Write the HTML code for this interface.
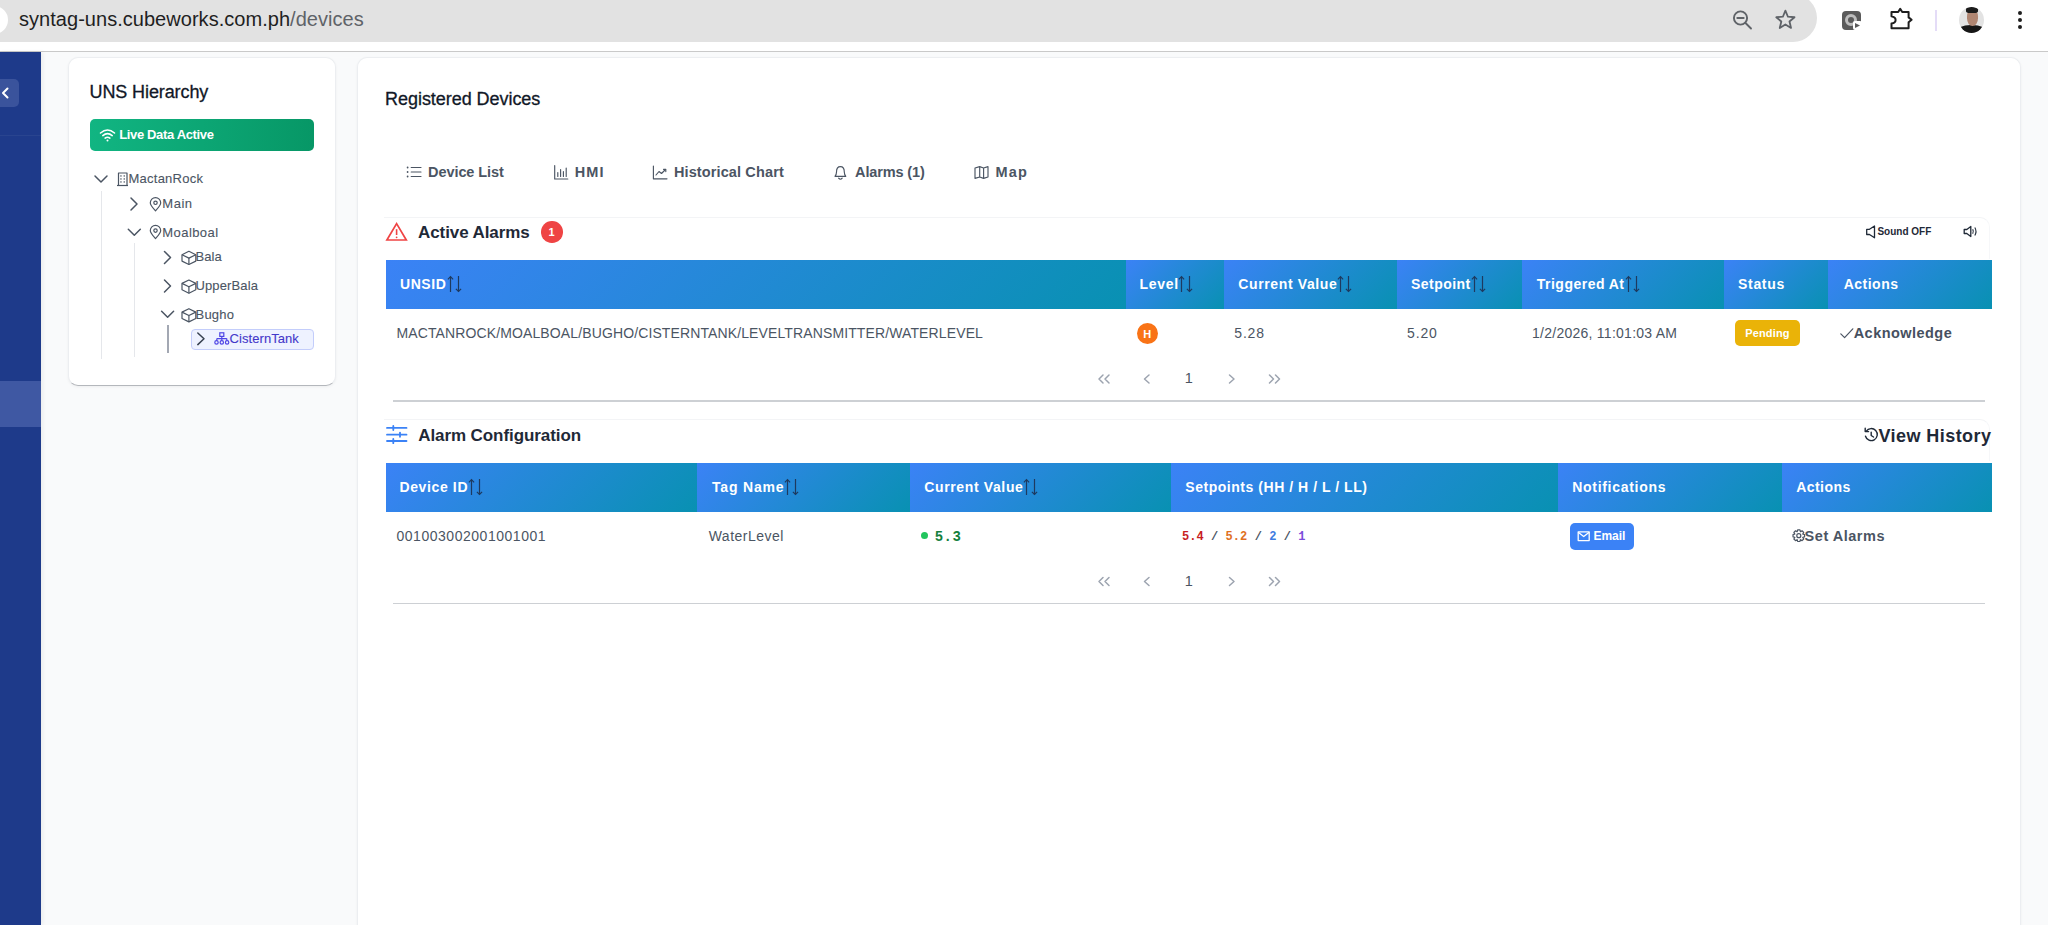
<!DOCTYPE html><html><head><meta charset="utf-8"><style>
*{box-sizing:border-box;margin:0;padding:0}
html,body{width:2048px;height:925px;overflow:hidden}
body{position:relative;background:#f9fafb;font-family:"Liberation Sans",sans-serif;color:#374151}
.a{position:absolute}
.t{position:absolute;white-space:nowrap;line-height:1}
svg.i{position:absolute;overflow:visible;left:0;top:0;width:2048px;height:925px}
.card{position:absolute;background:#fff;border-radius:10px;border:1px solid #eceef1;border-bottom-color:#b4b7bc;box-shadow:0 1px 3px rgba(0,0,0,.05)}
.hc{position:absolute;background:linear-gradient(135deg,#3b82f6 0%,#0891b2 100%)}
.ht{position:absolute;color:#fff;font-weight:700;font-size:14px;line-height:1;white-space:nowrap;letter-spacing:.5px}
</style></head><body>
<div class="a" style="left:0;top:0;width:2048px;height:51px;background:#fff"></div>
<div class="a" style="left:-30px;top:-6px;width:1847px;height:48px;border-radius:24px;background:#e2e2e2"></div>
<div class="a" style="left:-20px;top:6px;width:28px;height:28px;border-radius:50%;background:#fff"></div>
<div class="t" style="left:19.0px;top:9.47px;font-size:20px;font-weight:400;color:#1f1f1f;letter-spacing:0.035px;font-family:'Liberation Sans';">syntag-uns.cubeworks.com.ph<span style="color:#5f6368">/devices</span></div>
<div class="a" style="left:0;top:51px;width:2048px;height:1px;background:#c9c9c9"></div>
<div class="a" style="left:1959px;top:7px;width:25px;height:26px;border-radius:50%;background:#e3e3e3;overflow:hidden"><div class="a" style="left:-3px;top:18px;width:31px;height:14px;border-radius:48% 48% 0 0;background:#161616"></div><div class="a" style="left:7.5px;top:2.5px;width:11px;height:16px;border-radius:40% 40% 48% 48%;background:#b08672"></div><div class="a" style="left:6.5px;top:0px;width:12.5px;height:6px;border-radius:40% 40% 30% 30%;background:#1c1c1c"></div></div>
<div class="a" style="left:1842px;top:11px;width:19px;height:19px;border-radius:4px;background:#5a5a5a"></div>
<div class="a" style="left:1845px;top:14px;width:12px;height:12px;border-radius:50%;border:3px solid #bdbdbd"></div>
<div class="a" style="left:1853px;top:21px;width:9px;height:9px;border-radius:2px;background:#fff"></div>
<div class="a" style="left:1855px;top:23px;width:5px;height:5px;background:#5a5a5a;clip-path:polygon(0 0,100% 50%,0 100%)"></div>
<div class="a" style="left:2018px;top:11px;width:4px;height:4px;border-radius:50%;background:#1f1f1f"></div>
<div class="a" style="left:2018px;top:18px;width:4px;height:4px;border-radius:50%;background:#1f1f1f"></div>
<div class="a" style="left:2018px;top:25px;width:4px;height:4px;border-radius:50%;background:#1f1f1f"></div>
<div class="a" style="left:1935px;top:10px;width:2px;height:21px;background:#e4dcf7"></div>
<div class="a" style="left:0;top:52px;width:41px;height:873px;background:#1e3a8a;box-shadow:2px 0 4px rgba(0,0,0,.06)"></div>
<div class="a" style="left:0;top:135px;width:41px;height:1px;background:rgba(255,255,255,.05)"></div>
<div class="a" style="left:-8px;top:79px;width:27px;height:28px;border-radius:5px;background:#3a539c"></div>
<div class="a" style="left:0;top:381px;width:41px;height:46px;background:#3f58a3"></div>
<div class="card" style="left:68px;top:56.5px;width:267.5px;height:329.5px"></div>
<div class="t" style="left:89.5px;top:82.76px;font-size:18px;font-weight:400;color:#111827;letter-spacing:-0.102px;font-family:'Liberation Sans';-webkit-text-stroke:0.3px #111827">UNS Hierarchy</div>
<div class="a" style="left:90px;top:119px;width:224px;height:32px;border-radius:5px;background:linear-gradient(90deg,#11b582,#079766)"></div>
<div class="t" style="left:119.2px;top:128.0px;font-size:13px;font-weight:700;color:#fff;letter-spacing:-0.347px;font-family:'Liberation Sans';">Live Data Active</div>
<div class="a" style="left:101px;top:191px;width:1px;height:168px;background:#e5e7eb"></div>
<div class="a" style="left:134px;top:243px;width:1px;height:114px;background:#e5e7eb"></div>
<div class="a" style="left:167px;top:325px;width:2px;height:28px;background:#a3a8b3"></div>
<div class="a" style="left:190.5px;top:329px;width:123px;height:20.5px;border-radius:4px;background:#eef2ff;border:1.5px solid #c3cdfb"></div>
<div class="t" style="left:128.5px;top:172.2px;font-size:13px;font-weight:400;color:#4b5563;letter-spacing:0.239px;font-family:'Liberation Sans';-webkit-text-stroke:0.1px #4b5563">MactanRock</div>
<div class="t" style="left:162.3px;top:196.8px;font-size:13px;font-weight:400;color:#4b5563;letter-spacing:0.518px;font-family:'Liberation Sans';-webkit-text-stroke:0.1px #4b5563">Main</div>
<div class="t" style="left:162.3px;top:225.8px;font-size:13px;font-weight:400;color:#4b5563;letter-spacing:0.433px;font-family:'Liberation Sans';-webkit-text-stroke:0.1px #4b5563">Moalboal</div>
<div class="t" style="left:195.5px;top:249.7px;font-size:13px;font-weight:400;color:#4b5563;letter-spacing:0.07px;font-family:'Liberation Sans';-webkit-text-stroke:0.1px #4b5563">Bala</div>
<div class="t" style="left:195.5px;top:279.0px;font-size:13px;font-weight:400;color:#4b5563;letter-spacing:0.125px;font-family:'Liberation Sans';-webkit-text-stroke:0.1px #4b5563">UpperBala</div>
<div class="t" style="left:195.5px;top:307.5px;font-size:13px;font-weight:400;color:#4b5563;letter-spacing:0.235px;font-family:'Liberation Sans';-webkit-text-stroke:0.1px #4b5563">Bugho</div>
<div class="t" style="left:229.6px;top:331.9px;font-size:13px;font-weight:400;color:#4338ca;letter-spacing:0.056px;font-family:'Liberation Sans';-webkit-text-stroke:0.1px #4338ca">CisternTank</div>
<div class="card" style="left:356.5px;top:56.5px;width:1664px;height:900px"></div>
<div class="t" style="left:385.1px;top:89.76px;font-size:18px;font-weight:400;color:#111827;letter-spacing:-0.051px;font-family:'Liberation Sans';-webkit-text-stroke:0.3px #111827">Registered Devices</div>
<div class="t" style="left:428.1px;top:165.03px;font-size:14.5px;font-weight:700;color:#4b5563;letter-spacing:-0.084px;font-family:'Liberation Sans';">Device List</div>
<div class="t" style="left:574.8px;top:165.03px;font-size:14.5px;font-weight:700;color:#4b5563;letter-spacing:1.075px;font-family:'Liberation Sans';">HMI</div>
<div class="t" style="left:673.9px;top:165.03px;font-size:14.5px;font-weight:700;color:#4b5563;letter-spacing:0.124px;font-family:'Liberation Sans';">Historical Chart</div>
<div class="t" style="left:855.1px;top:165.03px;font-size:14.5px;font-weight:700;color:#4b5563;letter-spacing:-0.132px;font-family:'Liberation Sans';">Alarms (1)</div>
<div class="t" style="left:995.5px;top:165.03px;font-size:14.5px;font-weight:700;color:#4b5563;letter-spacing:1.179px;font-family:'Liberation Sans';">Map</div>
<div class="a" style="left:384px;top:217px;width:1606px;height:42px;border-top:1px solid #f3f4f6;border-right:1px solid #f6f7f9;border-radius:0 10px 0 0"></div>
<div class="a" style="left:384px;top:419px;width:1606px;height:42px;border-top:1px solid #f3f4f6;border-right:1px solid #f6f7f9;border-radius:0 10px 0 0"></div>
<div class="t" style="left:418.0px;top:224.41px;font-size:17px;font-weight:700;color:#1f2937;letter-spacing:-0.086px;font-family:'Liberation Sans';">Active Alarms</div>
<div class="a" style="left:541px;top:221px;width:21.5px;height:21.5px;border-radius:50%;background:#ef4444"></div>
<div class="t" style="left:548.5px;top:226.69px;font-size:11px;font-weight:700;color:#fff;letter-spacing:0px;font-family:'Liberation Sans';">1</div>
<div class="t" style="left:1877.4px;top:227.03px;font-size:10px;font-weight:700;color:#1f2937;letter-spacing:0.004px;font-family:'Liberation Sans';">Sound OFF</div>
<div class="hc" style="left:386px;top:260px;width:739.6px;height:49px"></div>
<div class="t" style="left:400.0px;top:276.95px;font-size:14px;font-weight:700;color:#fff;letter-spacing:0.563px;font-family:'Liberation Sans';">UNSID</div>
<div class="hc" style="left:1125.6px;top:260px;width:98.1px;height:49px"></div>
<div class="t" style="left:1139.4px;top:276.95px;font-size:14px;font-weight:700;color:#fff;letter-spacing:0.747px;font-family:'Liberation Sans';">Level</div>
<div class="hc" style="left:1223.7px;top:260px;width:172.9px;height:49px"></div>
<div class="t" style="left:1238.25px;top:276.95px;font-size:14px;font-weight:700;color:#fff;letter-spacing:0.626px;font-family:'Liberation Sans';">Current Value</div>
<div class="hc" style="left:1396.6px;top:260px;width:125.0px;height:49px"></div>
<div class="t" style="left:1411.0px;top:276.95px;font-size:14px;font-weight:700;color:#fff;letter-spacing:0.453px;font-family:'Liberation Sans';">Setpoint</div>
<div class="hc" style="left:1521.6px;top:260px;width:202.0px;height:49px"></div>
<div class="t" style="left:1536.8px;top:276.95px;font-size:14px;font-weight:700;color:#fff;letter-spacing:0.482px;font-family:'Liberation Sans';">Triggered At</div>
<div class="hc" style="left:1723.6px;top:260px;width:104.7px;height:49px"></div>
<div class="t" style="left:1738.0px;top:276.95px;font-size:14px;font-weight:700;color:#fff;letter-spacing:0.69px;font-family:'Liberation Sans';">Status</div>
<div class="hc" style="left:1828.3px;top:260px;width:163.7px;height:49px"></div>
<div class="t" style="left:1843.7px;top:276.95px;font-size:14px;font-weight:700;color:#fff;letter-spacing:0.491px;font-family:'Liberation Sans';">Actions</div>
<div class="hc" style="left:386px;top:462.5px;width:311.1px;height:49px"></div>
<div class="t" style="left:399.4px;top:480.05px;font-size:14px;font-weight:700;color:#fff;letter-spacing:0.635px;font-family:'Liberation Sans';">Device ID</div>
<div class="hc" style="left:697.1px;top:462.5px;width:212.6px;height:49px"></div>
<div class="t" style="left:712.0px;top:480.05px;font-size:14px;font-weight:700;color:#fff;letter-spacing:0.816px;font-family:'Liberation Sans';">Tag Name</div>
<div class="hc" style="left:909.7px;top:462.5px;width:261.4px;height:49px"></div>
<div class="t" style="left:924.2px;top:480.05px;font-size:14px;font-weight:700;color:#fff;letter-spacing:0.638px;font-family:'Liberation Sans';">Current Value</div>
<div class="hc" style="left:1171.1px;top:462.5px;width:386.9px;height:49px"></div>
<div class="t" style="left:1185.3px;top:480.05px;font-size:14px;font-weight:700;color:#fff;letter-spacing:0.534px;font-family:'Liberation Sans';">Setpoints (HH / H / L / LL)</div>
<div class="hc" style="left:1558px;top:462.5px;width:224.2px;height:49px"></div>
<div class="t" style="left:1572.2px;top:480.05px;font-size:14px;font-weight:700;color:#fff;letter-spacing:0.709px;font-family:'Liberation Sans';">Notifications</div>
<div class="hc" style="left:1782.2px;top:462.5px;width:209.8px;height:49px"></div>
<div class="t" style="left:1796.2px;top:480.05px;font-size:14px;font-weight:700;color:#fff;letter-spacing:0.441px;font-family:'Liberation Sans';">Actions</div>
<div class="t" style="left:396.5px;top:325.95px;font-size:14px;font-weight:400;color:#4b5563;letter-spacing:0.119px;font-family:'Liberation Sans';">MACTANROCK/MOALBOAL/BUGHO/CISTERNTANK/LEVELTRANSMITTER/WATERLEVEL</div>
<div class="a" style="left:1136.5px;top:322.5px;width:21.5px;height:21.5px;border-radius:50%;background:#f97316"></div>
<div class="t" style="left:1143.15px;top:328.59px;font-size:11px;font-weight:700;color:#fff;letter-spacing:0px;font-family:'Liberation Sans';">H</div>
<div class="t" style="left:1234.3px;top:325.95px;font-size:14px;font-weight:400;color:#4b5563;letter-spacing:0.813px;font-family:'Liberation Sans';">5.28</div>
<div class="t" style="left:1407.0px;top:325.95px;font-size:14px;font-weight:400;color:#4b5563;letter-spacing:0.879px;font-family:'Liberation Sans';">5.20</div>
<div class="t" style="left:1532.0px;top:325.95px;font-size:14px;font-weight:400;color:#4b5563;letter-spacing:0.257px;font-family:'Liberation Sans';">1/2/2026, 11:01:03 AM</div>
<div class="a" style="left:1735px;top:320.3px;width:65px;height:26px;border-radius:5px;background:#eab308"></div>
<div class="t" style="left:1745.3px;top:327.69px;font-size:11px;font-weight:700;color:#fff;letter-spacing:0.13px;font-family:'Liberation Sans';">Pending</div>
<div class="t" style="left:1853.7px;top:325.73px;font-size:14.5px;font-weight:700;color:#465060;letter-spacing:0.46px;font-family:'Liberation Sans';">Acknowledge</div>
<div class="t" style="left:396.5px;top:528.65px;font-size:14px;font-weight:400;color:#4b5563;letter-spacing:0.526px;font-family:'Liberation Sans';">001003002001001001</div>
<div class="t" style="left:708.7px;top:528.65px;font-size:14px;font-weight:400;color:#4b5563;letter-spacing:0.491px;font-family:'Liberation Sans';">WaterLevel</div>
<div class="a" style="left:920.5px;top:532px;width:7px;height:7px;border-radius:50%;background:#22c55e"></div>
<div class="t" style="left:934.7px;top:529.77px;font-size:14px;font-weight:700;color:#15803d;letter-spacing:0.499px;font-family:'Liberation Mono';">5.3</div>
<div class="t" style="left:1181.9px;top:531.3px;font-size:12px;font-weight:700;color:#6b7280;letter-spacing:0.074px;font-family:'Liberation Mono';"><span style="color:#c81e1e">5.4</span><span style="color:#4b5563"> / </span><span style="color:#e0701f">5.2</span><span style="color:#4b5563"> / </span><span style="color:#3f7be0">2</span><span style="color:#4b5563"> / </span><span style="color:#7c4ddb">1</span></div>
<div class="a" style="left:1569.5px;top:522.5px;width:64px;height:27px;border-radius:5px;background:#3b82f6"></div>
<div class="t" style="left:1593.6px;top:530.44px;font-size:12px;font-weight:700;color:#fff;letter-spacing:-0.095px;font-family:'Liberation Sans';">Email</div>
<div class="t" style="left:1804.6px;top:528.73px;font-size:14.5px;font-weight:700;color:#4b5563;letter-spacing:0.523px;font-family:'Liberation Sans';">Set Alarms</div>
<div class="t" style="left:418.2px;top:426.51px;font-size:17px;font-weight:700;color:#1f2937;letter-spacing:-0.08px;font-family:'Liberation Sans';">Alarm Configuration</div>
<div class="t" style="left:1878.5px;top:426.76px;font-size:18px;font-weight:700;color:#1f2937;letter-spacing:0.436px;font-family:'Liberation Sans';">View History</div>
<div class="t" style="left:1184.75px;top:371.23px;font-size:14.5px;font-weight:400;color:#4b5563;letter-spacing:0px;font-family:'Liberation Sans';">1</div>
<div class="a" style="left:393px;top:400px;width:1592px;height:1.5px;background:#cdd0d4"></div>
<div class="t" style="left:1184.75px;top:573.73px;font-size:14.5px;font-weight:400;color:#4b5563;letter-spacing:0px;font-family:'Liberation Sans';">1</div>
<div class="a" style="left:393px;top:602.5px;width:1592px;height:1.5px;background:#cdd0d4"></div>
<svg class="i" viewBox="0 0 2048 925"><g fill="none" stroke="#5f6368" stroke-width="1.9" stroke-linecap="round"><circle cx="1740.5" cy="18" r="6.6"/><path d="M1745.5 23 L1751 28.5"/><path d="M1737.3 18 H1743.7"/></g>
<polygon points="1785.40,10.60 1787.93,16.72 1794.53,17.23 1789.49,21.53 1791.04,27.97 1785.40,24.50 1779.76,27.97 1781.31,21.53 1776.27,17.23 1782.87,16.72" fill="none" stroke="#5f6368" stroke-width="1.8" stroke-linejoin="round"/>
<path d="M1891.5 12 H1898.2 L1900.2 8.8 L1902.2 12 H1908.6 V17.4 L1911.6 19.8 L1908.6 22.2 V28.3 H1891.5 V23.6 Q1895.6 22.8 1895.6 19.9 Q1895.6 17 1891.5 16.2 Z" fill="none" stroke="#1f1f1f" stroke-width="2" stroke-linejoin="round"/>
<path d="M7.5 88.5 L3 93 L7.5 97.5" fill="none" stroke="#fff" stroke-width="2" stroke-linecap="round" stroke-linejoin="round"/>
<g fill="none" stroke="#fff" stroke-width="1.6" stroke-linecap="round"><path d="M100.5 133 Q107.5 127 114.5 133"/><path d="M102.8 135.6 Q107.5 131.6 112.2 135.6"/><path d="M105.1 138.1 Q107.5 136.3 109.9 138.1"/></g><circle cx="107.5" cy="140.6" r="1" fill="#fff"/>
<path d="M95 176 L101 182 L107 176" fill="none" stroke="#4b5563" stroke-width="1.5" stroke-linecap="round" stroke-linejoin="round"/>
<path d="M131 198 L137 204 L131 210" fill="none" stroke="#4b5563" stroke-width="1.5" stroke-linecap="round" stroke-linejoin="round"/>
<path d="M128.3 229.3 L134.3 235.3 L140.3 229.3" fill="none" stroke="#4b5563" stroke-width="1.5" stroke-linecap="round" stroke-linejoin="round"/>
<path d="M164.5 251.5 L170.5 257.5 L164.5 263.5" fill="none" stroke="#4b5563" stroke-width="1.5" stroke-linecap="round" stroke-linejoin="round"/>
<path d="M164.5 280 L170.5 286 L164.5 292" fill="none" stroke="#4b5563" stroke-width="1.5" stroke-linecap="round" stroke-linejoin="round"/>
<path d="M161.6 311.3 L167.6 317.3 L173.6 311.3" fill="none" stroke="#4b5563" stroke-width="1.5" stroke-linecap="round" stroke-linejoin="round"/>
<path d="M197.8 333 L204 338.8 L197.8 344.6" fill="none" stroke="#374151" stroke-width="1.5" stroke-linecap="round" stroke-linejoin="round"/>
<g fill="none" stroke="#4b5563" stroke-width="1.2" stroke-linejoin="round"><rect x="118.5" y="173" width="8.5" height="12.5"/><path d="M117 185.5 H128"/></g><g fill="#4b5563"><rect x="120.3" y="175.3" width="1.3" height="1.3"/><rect x="123.6" y="175.3" width="1.3" height="1.3"/><rect x="120.3" y="178.3" width="1.3" height="1.3"/><rect x="123.6" y="178.3" width="1.3" height="1.3"/><rect x="120.3" y="181.3" width="1.3" height="1.3"/><rect x="123.6" y="181.3" width="1.3" height="1.3"/></g>
<path d="M155.5 210.8 C153.5 208.5 150.3 205.5 150.3 202.8 A5.2 5.2 0 0 1 160.7 202.8 C160.7 205.5 157.5 208.5 155.5 210.8 Z" fill="none" stroke="#4b5563" stroke-width="1.2" stroke-linejoin="round"/><circle cx="155.5" cy="202.8" r="1.7" fill="none" stroke="#4b5563" stroke-width="1.2" stroke-linejoin="round"/>
<path d="M155.5 238.60000000000002 C153.5 236.3 150.3 233.3 150.3 230.60000000000002 A5.2 5.2 0 0 1 160.7 230.60000000000002 C160.7 233.3 157.5 236.3 155.5 238.60000000000002 Z" fill="none" stroke="#4b5563" stroke-width="1.2" stroke-linejoin="round"/><circle cx="155.5" cy="230.60000000000002" r="1.7" fill="none" stroke="#4b5563" stroke-width="1.2" stroke-linejoin="round"/>
<g fill="none" stroke="#4b5563" stroke-width="1.2" stroke-linejoin="round"><path d="M188.9 251.3 L195.8 254.70000000000002 V261.1 L188.9 264.5 L182 261.1 V254.70000000000002 Z"/><path d="M182 254.70000000000002 L188.9 258.1 L195.8 254.70000000000002"/><path d="M188.9 258.1 V264.5"/></g>
<g fill="none" stroke="#4b5563" stroke-width="1.2" stroke-linejoin="round"><path d="M188.9 280 L195.8 283.4 V289.8 L188.9 293.2 L182 289.8 V283.4 Z"/><path d="M182 283.4 L188.9 286.8 L195.8 283.4"/><path d="M188.9 286.8 V293.2"/></g>
<g fill="none" stroke="#4b5563" stroke-width="1.2" stroke-linejoin="round"><path d="M188.9 308.7 L195.8 312.09999999999997 V318.5 L188.9 321.9 L182 318.5 V312.09999999999997 Z"/><path d="M182 312.09999999999997 L188.9 315.5 L195.8 312.09999999999997"/><path d="M188.9 315.5 V321.9"/></g>
<g fill="none" stroke="#4f46e5" stroke-width="1.2"><rect x="219.8" y="332.8" width="4" height="3.6"/><path d="M221.8 336.4 V338.6 M216.8 338.6 H226.8 M216.8 338.6 V340.8 M221.8 338.6 V340.8 M226.8 338.6 V340.8"/><circle cx="216.5" cy="342.4" r="1.7"/><circle cx="221.8" cy="342.4" r="1.7"/><circle cx="227.1" cy="342.4" r="1.7"/></g>
<g fill="none" stroke="#4b5563" stroke-width="1.15" stroke-linecap="round"><path d="M411.2 167.5 H421 M411.2 172 H421 M411.2 176.5 H421"/></g><g fill="#4b5563"><circle cx="407.6" cy="167.5" r="0.9"/><circle cx="407.6" cy="172" r="0.9"/><circle cx="407.6" cy="176.5" r="0.9"/></g>
<g fill="none" stroke="#4b5563" stroke-width="1.15" stroke-linecap="round"><path d="M554.7 165.5 V179 H567.8"/><path d="M557.8 176.5 V172.5 M560.6 176.5 V169.5 M563.4 176.5 V171.5 M566.2 176.5 V168"/></g>
<g fill="none" stroke="#4b5563" stroke-width="1.15" stroke-linecap="round" stroke-linejoin="round"><path d="M653.4 166 V178.8 H667"/><path d="M656 175 L659 171.5 L661.5 173.5 L665.5 169.5"/><path d="M663.5 169.3 H665.8 V171.6"/></g>
<g fill="none" stroke="#4b5563" stroke-width="1.15" stroke-linecap="round" stroke-linejoin="round"><path d="M835 176.3 Q836.5 174.5 836.5 172 Q836.5 166.6 840.4 166.6 Q844.3 166.6 844.3 172 Q844.3 174.5 845.8 176.3 Z"/><path d="M838.6 178.2 Q840.4 180.2 842.2 178.2"/></g>
<g fill="none" stroke="#4b5563" stroke-width="1.15" stroke-linecap="round" stroke-linejoin="round"><path d="M975 168 L979.7 166.6 L983.6 168 L988 166.6 V177 L983.6 178.4 L979.7 177 L975 178.4 Z M979.7 166.6 V177 M983.6 168 V178.4"/></g>
<path d="M396.6 223.6 L406.3 240 H386.9 Z" fill="none" stroke="#ef4444" stroke-width="1.7" stroke-linejoin="miter"/><path d="M396.6 229.2 V235" stroke="#ef4444" stroke-width="1.6"/><circle cx="396.6" cy="237.3" r="0.9" fill="#ef4444"/>
<path d="M1866.7 229.3 H1869.5 L1874.5 226 V237.8 L1869.5 234.5 H1866.7 Z" fill="none" stroke="#1f2937" stroke-width="1.3" stroke-linejoin="round"/>
<path d="M1964.2 229.5 H1966.8 L1970.8 226.5 V236.5 L1966.8 233.5 H1964.2 Z" fill="none" stroke="#1f2937" stroke-width="1.3" stroke-linejoin="round"/><path d="M1972.7 229.3 Q1974 231.5 1972.7 233.7 M1974.8 227.5 Q1977.2 231.5 1974.8 235.5" fill="none" stroke="#1f2937" stroke-width="1.1"/>
<g fill="none" stroke="#1e3a5f" stroke-width="1.2" stroke-linecap="butt"><path d="M450.5 276.8 V292"/><path d="M447.9 279.3 L450.5 276.6 L453.1 279.3"/><path d="M458.5 276 V291.4"/><path d="M455.9 288.8 L458.5 291.5 L461.1 288.8"/></g>
<g fill="none" stroke="#1e3a5f" stroke-width="1.2" stroke-linecap="butt"><path d="M1181.5 276.8 V292"/><path d="M1178.9 279.3 L1181.5 276.6 L1184.1 279.3"/><path d="M1189.5 276 V291.4"/><path d="M1186.9 288.8 L1189.5 291.5 L1192.1 288.8"/></g>
<g fill="none" stroke="#1e3a5f" stroke-width="1.2" stroke-linecap="butt"><path d="M1340.5 276.8 V292"/><path d="M1337.9 279.3 L1340.5 276.6 L1343.1 279.3"/><path d="M1348.5 276 V291.4"/><path d="M1345.9 288.8 L1348.5 291.5 L1351.1 288.8"/></g>
<g fill="none" stroke="#1e3a5f" stroke-width="1.2" stroke-linecap="butt"><path d="M1474.5 276.8 V292"/><path d="M1471.9 279.3 L1474.5 276.6 L1477.1 279.3"/><path d="M1482.5 276 V291.4"/><path d="M1479.9 288.8 L1482.5 291.5 L1485.1 288.8"/></g>
<g fill="none" stroke="#1e3a5f" stroke-width="1.2" stroke-linecap="butt"><path d="M1628.5 276.8 V292"/><path d="M1625.9 279.3 L1628.5 276.6 L1631.1 279.3"/><path d="M1636.5 276 V291.4"/><path d="M1633.9 288.8 L1636.5 291.5 L1639.1 288.8"/></g>
<g fill="none" stroke="#1e3a5f" stroke-width="1.2" stroke-linecap="butt"><path d="M471.5 479.8 V495"/><path d="M468.9 482.3 L471.5 479.6 L474.1 482.3"/><path d="M479.5 479 V494.4"/><path d="M476.9 491.8 L479.5 494.5 L482.1 491.8"/></g>
<g fill="none" stroke="#1e3a5f" stroke-width="1.2" stroke-linecap="butt"><path d="M787.5 479.8 V495"/><path d="M784.9 482.3 L787.5 479.6 L790.1 482.3"/><path d="M795.5 479 V494.4"/><path d="M792.9 491.8 L795.5 494.5 L798.1 491.8"/></g>
<g fill="none" stroke="#1e3a5f" stroke-width="1.2" stroke-linecap="butt"><path d="M1026.5 479.8 V495"/><path d="M1023.9 482.3 L1026.5 479.6 L1029.1 482.3"/><path d="M1034.5 479 V494.4"/><path d="M1031.9 491.8 L1034.5 494.5 L1037.1 491.8"/></g>
<path d="M1840.8 333.8 L1844.6 337.6 L1852.8 328.8" fill="none" stroke="#4b5563" stroke-width="1.2" stroke-linecap="round" stroke-linejoin="round"/>
<path d="M1103 375 L1099 379 L1103 383 M1109 375 L1105 379 L1109 383" fill="none" stroke="#9ca3af" stroke-width="1.5" stroke-linecap="round" stroke-linejoin="round"/>
<path d="M1149 375 L1144.5 379 L1149 383" fill="none" stroke="#9ca3af" stroke-width="1.5" stroke-linecap="round" stroke-linejoin="round"/>
<path d="M1229.5 375 L1234 379 L1229.5 383" fill="none" stroke="#9ca3af" stroke-width="1.5" stroke-linecap="round" stroke-linejoin="round"/>
<path d="M1269.5 375 L1273.5 379 L1269.5 383 M1275.5 375 L1279.5 379 L1275.5 383" fill="none" stroke="#9ca3af" stroke-width="1.5" stroke-linecap="round" stroke-linejoin="round"/>
<path d="M1103 577.5 L1099 581.5 L1103 585.5 M1109 577.5 L1105 581.5 L1109 585.5" fill="none" stroke="#9ca3af" stroke-width="1.5" stroke-linecap="round" stroke-linejoin="round"/>
<path d="M1149 577.5 L1144.5 581.5 L1149 585.5" fill="none" stroke="#9ca3af" stroke-width="1.5" stroke-linecap="round" stroke-linejoin="round"/>
<path d="M1229.5 577.5 L1234 581.5 L1229.5 585.5" fill="none" stroke="#9ca3af" stroke-width="1.5" stroke-linecap="round" stroke-linejoin="round"/>
<path d="M1269.5 577.5 L1273.5 581.5 L1269.5 585.5 M1275.5 577.5 L1279.5 581.5 L1275.5 585.5" fill="none" stroke="#9ca3af" stroke-width="1.5" stroke-linecap="round" stroke-linejoin="round"/>
<g fill="none" stroke="#3b82f6" stroke-width="1.8" stroke-linecap="round"><path d="M387 427.9 H406.5 M387 434.7 H406.5 M387 441 H406.5"/><path d="M393.3 425.9 V430 M400 432.6 V436.8 M393.3 439 V443.2"/></g>
<g fill="none" stroke="#1f2937" stroke-width="1.4" stroke-linecap="round" stroke-linejoin="round"><path d="M1866.3 431.2 A6 6 0 1 1 1865.5 436.2"/><path d="M1865.2 428.2 V431.6 H1868.6"/><path d="M1871.2 432.2 V435.5 L1873.5 437"/></g>
<g fill="none" stroke="#fff" stroke-width="1.3" stroke-linejoin="round"><rect x="1578.2" y="531.8" width="11" height="8.8"/><path d="M1578.2 532.2 L1583.7 536.5 L1589.2 532.2"/></g>
<polygon points="1802.79,534.11 1804.58,534.53 1804.58,536.87 1802.79,537.29 1802.75,537.40 1803.72,538.96 1802.06,540.62 1800.50,539.65 1800.39,539.69 1799.97,541.48 1797.63,541.48 1797.21,539.69 1797.10,539.65 1795.54,540.62 1793.88,538.96 1794.85,537.40 1794.81,537.29 1793.02,536.87 1793.02,534.53 1794.81,534.11 1794.85,534.00 1793.88,532.44 1795.54,530.78 1797.10,531.75 1797.21,531.71 1797.63,529.92 1799.97,529.92 1800.39,531.71 1800.50,531.75 1802.06,530.78 1803.72,532.44 1802.75,534.00" fill="none" stroke="#4b5563" stroke-width="1.2" stroke-linejoin="round"/><circle cx="1798.8" cy="535.7" r="2" fill="none" stroke="#4b5563" stroke-width="1.2"/></svg>
</body></html>
